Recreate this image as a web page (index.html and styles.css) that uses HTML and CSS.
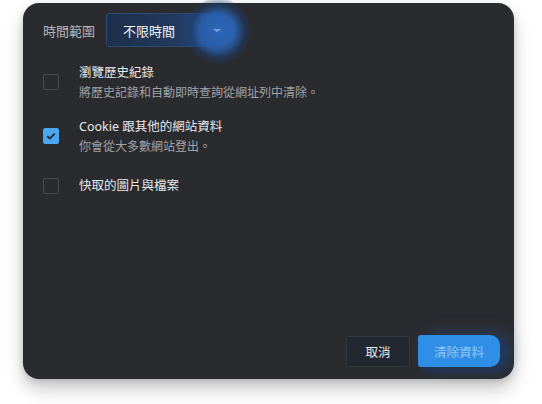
FILE: index.html
```html
<!DOCTYPE html>
<html lang="zh-TW">
<head>
    <meta charset="UTF-8">
    <title>清除瀏覽資料</title>
    <link rel="stylesheet" href="styles.css">
</head>
<body>
    <div class="dialog">
        <div class="range-row">
            <span class="range-label">時間範圍</span>
            <div class="select">
                <span class="select-value">不限時間</span>
                <span class="select-arrow"></span>
            </div>
        </div>

        <div class="options">
            <label class="option">
                <span class="checkbox"></span>
                <span class="option-text">
                    <span class="option-title">瀏覽歷史紀錄</span>
                    <span class="option-sub">將歷史記錄和自動即時查詢從網址列中清除。</span>
                </span>
            </label>
            <label class="option">
                <span class="checkbox checked">
                    <svg viewBox="0 0 16 16" width="16" height="16"><path d="M3.8 8.2l2.8 2.8 5.6-5.8" fill="none" stroke="#1b2430" stroke-width="2"/></svg>
                </span>
                <span class="option-text">
                    <span class="option-title">Cookie 跟其他的網站資料</span>
                    <span class="option-sub">你會從大多數網站登出。</span>
                </span>
            </label>
            <label class="option single">
                <span class="checkbox"></span>
                <span class="option-text">
                    <span class="option-title">快取的圖片與檔案</span>
                </span>
            </label>
        </div>

        <div class="footer">
            <button class="btn btn-cancel">取消</button>
            <button class="btn btn-primary">清除資料</button>
        </div>
    </div>
</body>
</html>
```

FILE: styles.css
```css
* {
    margin: 0;
    padding: 0;
    box-sizing: border-box;
    font-family: 'Noto Sans', 'Noto Sans CJK TC', sans-serif;
}

body {
    background: #ffffff;
    width: 542px;
    height: 404px;
    overflow: hidden;
}

.dialog {
    margin: 3px 0 0 23px;
    width: 491px;
    height: 376px;
    background: #2a2b2f;
    border-radius: 16px;
    box-shadow: 0 10px 18px rgba(0, 0, 0, 0.22), 0 2px 6px rgba(0, 0, 0, 0.12);
    display: flex;
    flex-direction: column;
    padding: 10px 14px 12px 20px;
}

.range-row {
    display: flex;
    align-items: center;
    gap: 11px;
}

.range-label {
    color: #b5b6b9;
    font-size: 13px;
}

.select {
    position: relative;
    width: 130px;
    height: 34px;
    border: 1px solid #2f4a70;
    border-radius: 3px 17px 17px 3px;
    background: linear-gradient(90deg, #1d2f4a 0%, #213a5e 55%, #2960a8 100%);
    display: flex;
    align-items: center;
    padding-left: 16px;
}

.select::after {
    content: '';
    position: absolute;
    left: 78px;
    top: -16px;
    width: 66px;
    height: 66px;
    border-radius: 50%;
    background: radial-gradient(circle, rgba(45, 105, 190, 0.9) 0%, rgba(42, 95, 172, 0.85) 40%, rgba(30, 60, 110, 0.5) 58%, rgba(30, 50, 80, 0) 75%);
}

.select-value {
    color: #f2f4f7;
    font-size: 13px;
}

.select-arrow {
    position: absolute;
    left: 106px;
    top: 15px;
    width: 0;
    height: 0;
    border-left: 4px solid transparent;
    border-right: 4px solid transparent;
    border-top: 3px solid #7fa3d4;
    z-index: 1;
}

.options {
    display: flex;
    flex-direction: column;
    margin-top: 8px;
}

.option {
    display: flex;
    align-items: center;
    gap: 20px;
    height: 54px;
}

.option.single {
    height: 46px;
}

.checkbox {
    width: 16px;
    height: 16px;
    border: 1.5px solid #494a4f;
    border-radius: 2px;
    flex-shrink: 0;
    display: flex;
    align-items: center;
    justify-content: center;
}

.checkbox.checked {
    background: #4aa6ee;
    border-color: #4aa6ee;
}

.option-text {
    display: flex;
    flex-direction: column;
    gap: 2px;
}

.option-title {
    color: #e8e9eb;
    font-size: 12.5px;
    line-height: 18px;
}

.option-sub {
    color: #a2a3a7;
    font-size: 12px;
    line-height: 17px;
}

.footer {
    margin-top: auto;
    display: flex;
    justify-content: flex-end;
    align-items: flex-end;
    gap: 8px;
}

.btn {
    font-size: 12.5px;
    border-radius: 3px;
    cursor: pointer;
}

.btn-cancel {
    width: 64px;
    height: 31px;
    background: #232830;
    border: 1px solid #353a42;
    color: #e6e8eb;
}

.btn-primary {
    position: relative;
    width: 82px;
    height: 32px;
    background: #2f8ee6;
    border: none;
    border-radius: 3px 10px 10px 3px;
    color: #93c8f7;
    box-shadow: 6px 4px 0 2px rgba(30, 55, 95, 0.55), 10px 0 18px rgba(50, 110, 200, 0.35);
}
```
